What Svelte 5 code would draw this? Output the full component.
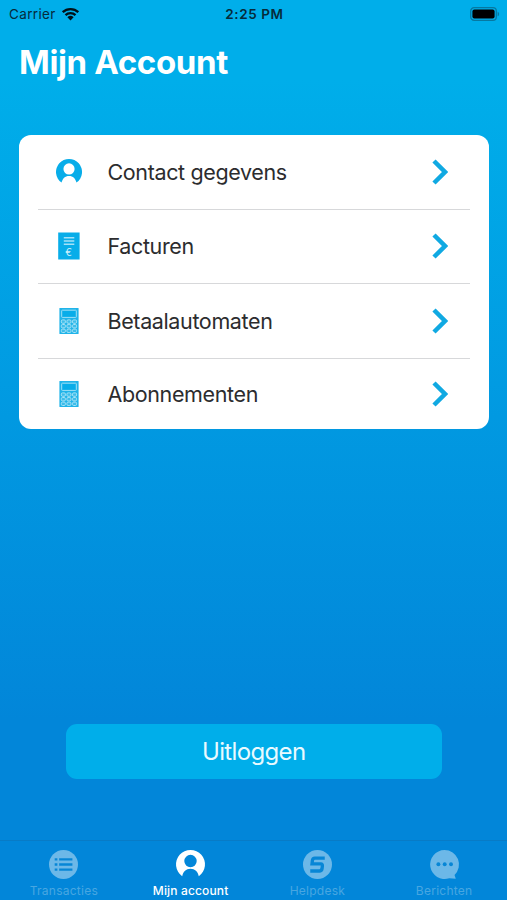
<script lang="ts">
	type Icon = 'person' | 'invoice' | 'terminal';
	type TabIcon = 'list' | 'person' | 'helpdesk' | 'chat';

	const menuItems: { label: string; icon: Icon }[] = [
		{ label: 'Contact gegevens', icon: 'person' },
		{ label: 'Facturen', icon: 'invoice' },
		{ label: 'Betaalautomaten', icon: 'terminal' },
		{ label: 'Abonnementen', icon: 'terminal' }
	];

	const tabs: { label: string; icon: TabIcon }[] = [
		{ label: 'Transacties', icon: 'list' },
		{ label: 'Mijn account', icon: 'person' },
		{ label: 'Helpdesk', icon: 'helpdesk' },
		{ label: 'Berichten', icon: 'chat' }
	];

	let activeTab = $state('Mijn account');
</script>

{#snippet person()}
	<path
		fill-rule="evenodd"
		d="M6 25.4A14 14 0 1 1 22 25.4C21 21 18.4 18.2 14 18.2S7 21 6 25.4ZM14 4.7a6 6 0 1 0 0 12a6 6 0 0 0 0-12Z"
	/>
{/snippet}

<div class="screen">
	<header class="status-bar">
		<div class="carrier">
			<span>Carrier</span>
			<svg class="wifi" viewBox="0 0 18 14">
				<path d="M1.2 5.2a11.2 11.2 0 0 1 15.6 0M4 8.1a7.2 7.2 0 0 1 10 0" />
				<path class="dot" d="M5.9 10.2a4.5 4.5 0 0 1 6.2 0L9 13.5Z" />
			</svg>
		</div>
		<span class="time">2:25 PM</span>
		<svg class="battery" viewBox="0 0 30 14">
			<rect class="shell" x="0.7" y="0.7" width="25.6" height="12.6" rx="3.4" />
			<rect x="2.4" y="2.4" width="22.2" height="9.2" rx="2" />
			<path class="cap" d="M27.6 4.7c2 .7 2 3.9 0 4.6Z" />
		</svg>
	</header>

	<h1>Mijn Account</h1>

	<nav class="menu">
		{#each menuItems as item}
			<button class="menu-item">
				<svg class="menu-icon" viewBox="0 0 28 28">
					{#if item.icon === 'person'}
						<g transform="translate(1 1) scale(0.93)">{@render person()}</g>
					{:else if item.icon === 'invoice'}
						<rect x="3.2" y="0.5" width="21.4" height="27" />
						<path class="line" d="M8.8 5.7h10.5M8.8 9h10.5M8.8 12.3h10.5" />
						<text class="euro" x="13.6" y="23.8">€</text>
					{:else}
						<rect class="terminal" x="4.4" y="0.9" width="19.2" height="26.2" rx="0.6" />
						<rect class="display" x="6.7" y="3.2" width="14.6" height="7.2" rx="0.6" />
						{#each [12.9, 17.5, 22.1] as y}
							{#each [6.3, 11.9, 17.5] as x}
								<rect class="key" {x} {y} width="4.1" height="3.4" rx="1.2" />
							{/each}
						{/each}
					{/if}
				</svg>
				<span class="menu-label">{item.label}</span>
				<svg class="chevron" viewBox="0 0 16 26">
					<path d="M2 2l11 11L2 24" />
				</svg>
			</button>
		{/each}
	</nav>

	<button class="logout">Uitloggen</button>

	<footer class="tab-bar">
		{#each tabs as tab}
			<button
				class="tab"
				class:active={activeTab === tab.label}
				onclick={() => (activeTab = tab.label)}
			>
				<svg class="tab-icon" viewBox="0 0 28 28">
					{#if tab.icon === 'list'}
						<circle cx="14" cy="14" r="14" />
						<path class="cut" d="M5.5 9h2.6M9.8 9h12.8M5.5 14h2.6M9.8 14h12.8M5.5 19h2.6M9.8 19h12.8" />
					{:else if tab.icon === 'person'}
						{@render person()}
					{:else if tab.icon === 'helpdesk'}
						<circle cx="14" cy="14" r="14" />
						<path class="swirl" d="M21 7.8H11.5Q9.3 7.8 9.1 10L8.7 13.4H17.2Q19 13.4 18.7 15.4L18.4 18Q18 20.3 15.8 20.3H7" />
					{:else}
						<path d="M14 0a14 14 0 0 1 9.7 24.1l1.2 3.6l-6.4-.4A14 14 0 1 1 14 0Z" />
						<circle class="hole" cx="8.1" cy="13.7" r="1.9" />
						<circle class="hole" cx="14.2" cy="13.7" r="1.9" />
						<circle class="hole" cx="20.3" cy="13.7" r="1.9" />
					{/if}
				</svg>
				<span>{tab.label}</span>
			</button>
		{/each}
	</footer>
</div>

<style>
	:global(body) {
		margin: 0;
	}

	.screen {
		display: flex;
		flex-direction: column;
		box-sizing: border-box;
		width: 100%;
		height: 900px;
		overflow: hidden;
		background: linear-gradient(#00aeea 0, #00aeea 80px, #0286d9 720px, #0286d9 100%);
		font-family: Inter, 'Liberation Sans', sans-serif;
	}

	button {
		margin: 0;
		padding: 0;
		border: 0;
		background: none;
		font: inherit;
		text-align: left;
		cursor: pointer;
	}

	svg {
		display: block;
		flex: none;
	}

	.status-bar {
		display: grid;
		grid-template-columns: 1fr auto 1fr;
		align-items: center;
		height: 27px;
		padding: 0 7px 0 9px;
		color: #062b3b;
		font-size: 13.5px;
	}

	.carrier {
		display: flex;
		align-items: center;
		gap: 5px;
		letter-spacing: 0.35px;
	}

	.wifi {
		width: 19px;
		height: 14px;
		fill: none;
		stroke: #001018;
		stroke-width: 2.3;
	}

	.wifi .dot {
		fill: #001018;
		stroke: none;
	}

	.time {
		font-weight: 600;
		letter-spacing: 0.6px;
	}

	.battery {
		justify-self: end;
		width: 30px;
		height: 14px;
	}

	.battery .shell {
		fill: none;
		stroke: #0678a1;
		stroke-width: 1.3;
	}

	.battery .cap {
		fill: #0678a1;
	}

	h1 {
		margin: 14px 0 0 19px;
		color: white;
		font-size: 33px;
		font-weight: 700;
		line-height: 42px;
		letter-spacing: -0.35px;
	}

	.menu {
		display: flex;
		flex-direction: column;
		box-sizing: border-box;
		height: 293.5px;
		margin: 52px 18px 0 19px;
		padding: 0 19px;
		border-radius: 12px;
		background: white;
	}

	.menu-item {
		display: flex;
		align-items: center;
		box-sizing: border-box;
		height: 74.5px;
		padding: 0 22px 0 17px;
		border-bottom: 1.5px solid #d7d8da;
		color: #2c2c2e;
	}

	.menu-item:last-child {
		height: 70px;
		border-bottom: 0;
	}

	.menu-icon {
		width: 28px;
		height: 28px;
		margin-right: 24.5px;
		fill: #08ade9;
	}

	.menu-icon .line {
		fill: none;
		stroke: #a5e1f7;
		stroke-width: 1.4;
	}

	.euro {
		fill: #d2f1fc;
		font-size: 10px;
		text-anchor: middle;
	}

	.terminal {
		fill: #20b4e9;
	}

	.display {
		stroke: #9fe0f6;
		stroke-width: 1;
	}

	.key {
		fill: #3fbdea;
		stroke: #a5e2f6;
		stroke-width: 1;
	}

	.menu-label {
		flex: 1;
		font-size: 21.5px;
		letter-spacing: -0.37px;
	}

	.chevron {
		width: 16px;
		height: 26px;
		fill: none;
		stroke: #10a9e2;
		stroke-width: 4.5;
	}

	.logout {
		height: 55px;
		margin: 295.5px 65.5px 0 66px;
		border-radius: 11px;
		background: #00aeea;
		color: #e9faff;
		font-size: 24px;
		letter-spacing: -0.65px;
		text-align: center;
	}

	.tab-bar {
		display: grid;
		grid-template-columns: repeat(4, 1fr);
		box-sizing: border-box;
		height: 60px;
		margin-top: auto;
		border-top: 1px solid #087bc6;
	}

	.tab {
		display: flex;
		flex-direction: column;
		align-items: center;
		padding: 9px 0 0 1px;
		color: #48a6e1;
		font-size: 12px;
		line-height: 16px;
		letter-spacing: 0.25px;
	}

	.tab.active {
		color: white;
		font-weight: 500;
		letter-spacing: 0.15px;
	}

	.tab-icon {
		width: 29px;
		height: 29px;
		margin-bottom: 4px;
		overflow: visible;
		fill: #6cb8e8;
	}

	.active .tab-icon {
		fill: white;
	}

	.tab-icon .cut {
		fill: none;
		stroke: #0786d6;
		stroke-width: 2.2;
	}

	.tab-icon .swirl {
		fill: none;
		stroke: #0786d6;
		stroke-width: 3.2;
	}

	.tab-icon .hole {
		fill: #0786d6;
	}
</style>
